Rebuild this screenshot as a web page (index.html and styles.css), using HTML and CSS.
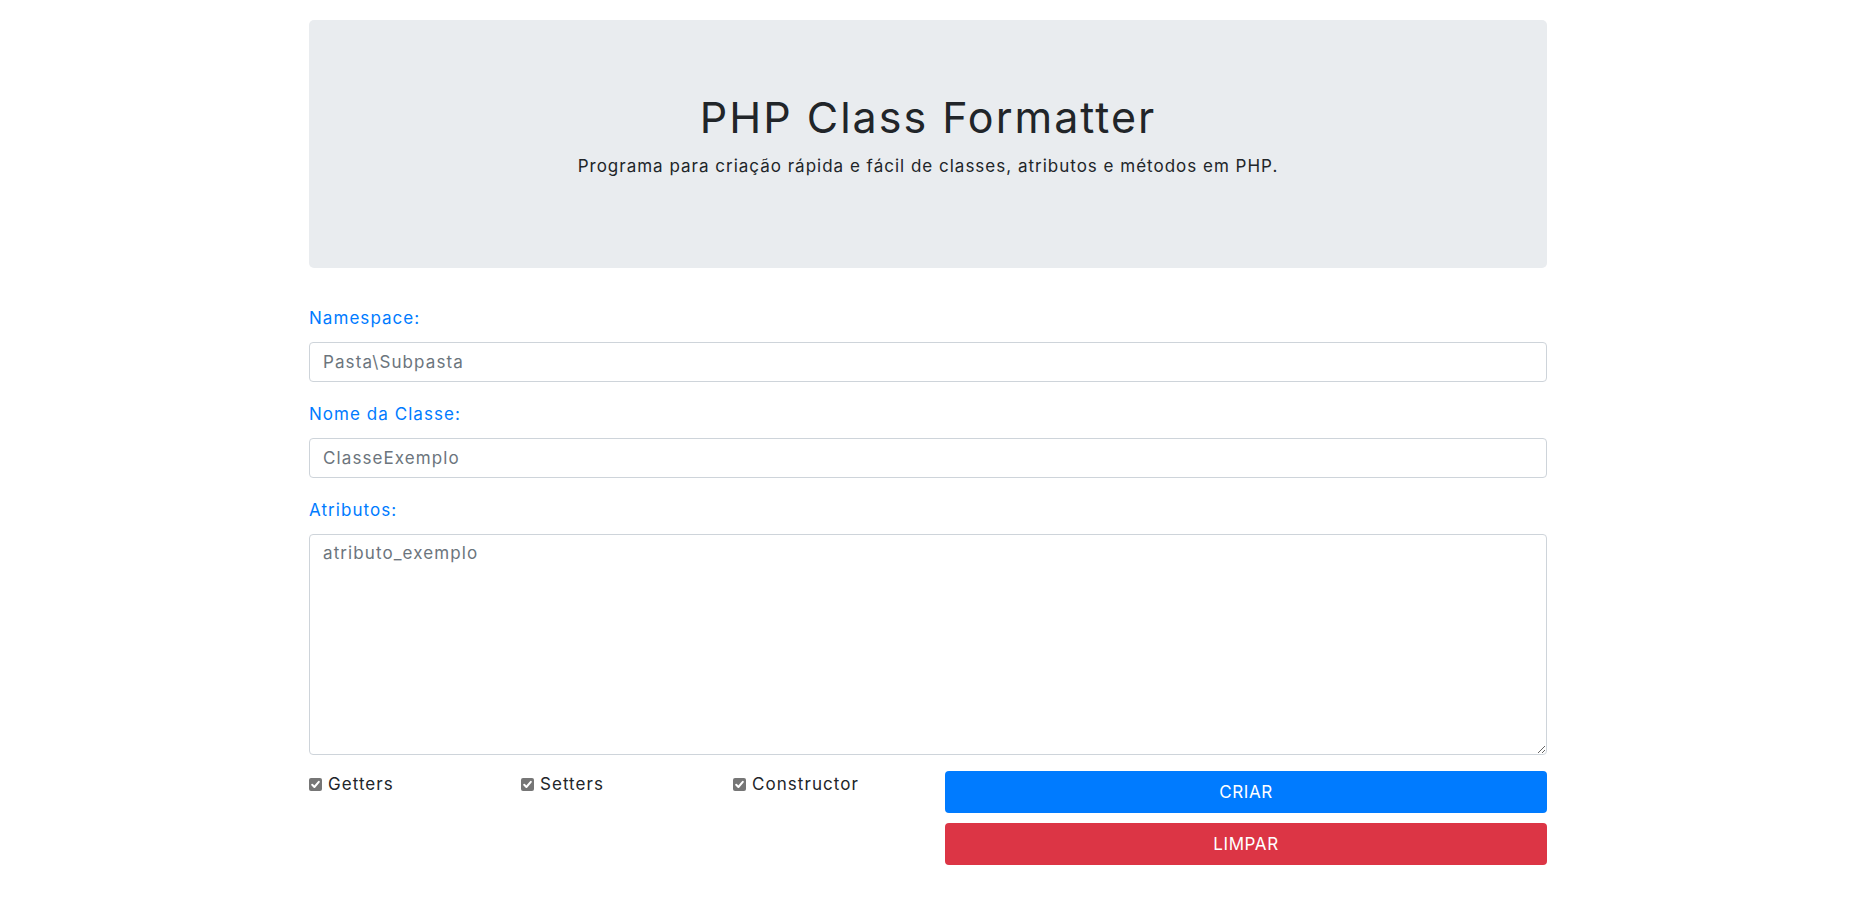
FILE: index.html
```html
<!DOCTYPE html>
<html lang="pt-br">
<head>
<meta charset="utf-8">
<title>PHP Class Formatter</title>
<link rel="stylesheet" href="styles.css">
</head>
<body>
<div class="container">
  <header class="jumbotron">
    <h1 class="title">PHP Class Formatter</h1>
    <p class="lead">Programa para criação rápida e fácil de classes, atributos e métodos em PHP.</p>
  </header>

  <form class="form">
    <div class="group">
      <label class="label" for="ns">Namespace:</label>
      <input class="control" id="ns" type="text" placeholder="Pasta\Subpasta">
    </div>
    <div class="group">
      <label class="label" for="cls">Nome da Classe:</label>
      <input class="control" id="cls" type="text" placeholder="ClasseExemplo">
    </div>
    <div class="group group-last">
      <label class="label" for="attrs">Atributos:</label>
      <textarea class="control area" id="attrs" placeholder="atributo_exemplo"></textarea>
    </div>

    <div class="bottom">
      <div class="checks">
        <label class="check"><span class="box"><svg viewBox="0 0 13 13" width="13" height="13"><path d="M3.2 6.8 L5.4 9 L9.8 3.8" fill="none" stroke="#fff" stroke-width="2" stroke-linecap="round" stroke-linejoin="round"/></svg></span><span class="check-text">Getters</span></label>
        <label class="check"><span class="box"><svg viewBox="0 0 13 13" width="13" height="13"><path d="M3.2 6.8 L5.4 9 L9.8 3.8" fill="none" stroke="#fff" stroke-width="2" stroke-linecap="round" stroke-linejoin="round"/></svg></span><span class="check-text">Setters</span></label>
        <label class="check"><span class="box"><svg viewBox="0 0 13 13" width="13" height="13"><path d="M3.2 6.8 L5.4 9 L9.8 3.8" fill="none" stroke="#fff" stroke-width="2" stroke-linecap="round" stroke-linejoin="round"/></svg></span><span class="check-text">Constructor</span></label>
      </div>
      <div class="actions">
        <button type="button" class="btn btn-blue">CRIAR</button>
        <button type="button" class="btn btn-red">LIMPAR</button>
      </div>
    </div>
  </form>
</div>
</body>
</html>
```

FILE: styles.css
```css
* { box-sizing: border-box; }

html, body {
  margin: 0;
  background: #fff;
}

body {
  padding-right: 17px;
  font-family: Inter, "Open Sans", sans-serif;
  font-size: 17px;
  letter-spacing: 1.05px;
  line-height: 24px;
  color: #212529;
}

.container {
  width: 1238px;
  margin: 0 auto;
  padding-top: 20px;
}

.jumbotron {
  background: #e9ecef;
  border-radius: 5px;
  height: 248px;
  padding-top: 71px;
  text-align: center;
}

.title {
  margin: 0;
  font-size: 43px;
  letter-spacing: 2px;
  line-height: 52px;
  font-weight: 400;
  color: #212529;
}

.lead {
  margin: 11px 0 0;
  font-size: 17px;
  letter-spacing: 1px;
  line-height: 24px;
  color: #212529;
}

.form {
  padding-top: 38px;
}

.group {
  display: flex;
  flex-direction: column;
  margin-bottom: 20px;
}

.group-last {
  margin-bottom: 16px;
}

.label {
  color: #007bff;
  line-height: 24px;
  margin-bottom: 12px;
}

.control {
  display: block;
  width: 100%;
  height: 40px;
  padding: 6px 12px 6px 13px;
  font-family: inherit;
  font-size: 17px;
  letter-spacing: 1.1px;
  line-height: 24px;
  color: #495057;
  background: #fff;
  border: 1px solid #ced4da;
  border-radius: 4px;
  outline: none;
}

.control::placeholder {
  color: #6c757d;
  opacity: 1;
}

.area {
  height: 221px;
  resize: vertical;
}

.bottom {
  display: flex;
}

.checks {
  width: 636px;
  flex: none;
  display: grid;
  grid-template-columns: repeat(3, 212px);
  align-items: start;
  padding-top: 1px;
}

.check {
  display: flex;
  align-items: center;
  gap: 6px;
  line-height: 24px;
  color: #212529;
}

.box {
  width: 13px;
  height: 13px;
  background: #767676;
  border-radius: 2px;
  display: flex;
  margin-top: 1px;
}

.actions {
  flex: 1;
  display: flex;
  flex-direction: column;
  gap: 10px;
}

.btn {
  display: block;
  width: 100%;
  height: 42px;
  border: none;
  border-radius: 4px;
  font-family: inherit;
  font-size: 17px;
  letter-spacing: 0.6px;
  color: #fff;
  cursor: pointer;
}

.btn-blue { background: #007bff; }
.btn-red { background: #dc3545; }
```
